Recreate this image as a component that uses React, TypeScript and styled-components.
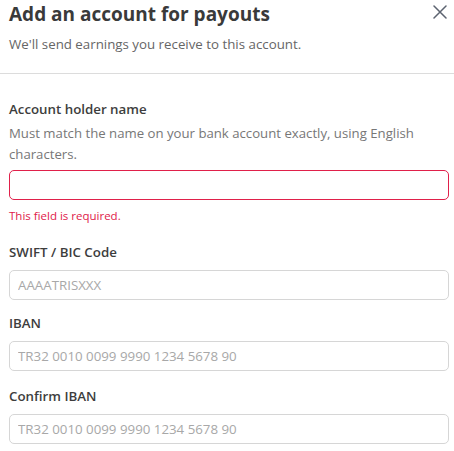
import React from "react";
import styled, { createGlobalStyle } from "styled-components";

const GlobalStyle = createGlobalStyle`
  html, body {
    margin: 0;
    padding: 0;
    background: #ffffff;
  }
  body {
    font-family: "Open Sans", "Noto Sans", sans-serif;
    color: #3d3d3d;
  }
  * {
    box-sizing: border-box;
  }
`;

const Panel = styled.div`
  width: 454px;
  height: 451px;
  overflow: hidden;
  background: #fff;
`;

const Header = styled.div`
  display: flex;
  align-items: flex-start;
  justify-content: space-between;
  padding: 1px 6px 0 9px;
  height: 74px;
  border-bottom: 1px solid #dcdcdc;
`;

const HeaderText = styled.div`
  display: flex;
  flex-direction: column;
`;

const Title = styled.h2`
  margin: 0;
  font-size: 19px;
  font-weight: 700;
  line-height: 26px;
  color: #3a3a3a;
`;

const Subtitle = styled.p`
  margin: 8px 0 0;
  font-size: 13.3px;
  line-height: 18px;
  color: #666;
`;

const CloseButton = styled.button`
  border: none;
  background: none;
  padding: 0;
  margin-top: 3px;
  width: 16px;
  height: 16px;
  cursor: pointer;
  display: flex;
  align-items: center;
  justify-content: center;
`;

const Form = styled.div`
  display: flex;
  flex-direction: column;
  padding: 25px 5px 0 9px;
`;

const Field = styled.div<{ $gap?: number }>`
  display: flex;
  flex-direction: column;
  margin-bottom: ${(p) => p.$gap ?? 15}px;
`;

const Label = styled.label`
  font-size: 13.3px;
  font-weight: 600;
  line-height: 20px;
  color: #3d3d3d;
  margin-bottom: 8px;
`;

const Help = styled.p`
  margin: -4px 0 5px;
  font-size: 13.2px;
  line-height: 21px;
  color: #777;
`;

const Input = styled.input<{ $invalid?: boolean }>`
  width: 100%;
  height: 30px;
  border: 1px solid ${(p) => (p.$invalid ? "#e0204a" : "#d6d6d6")};
  border-radius: 5px;
  padding: 0 8px;
  font-family: inherit;
  font-size: 13.3px;
  color: #333;
  outline: none;
  &::placeholder {
    color: #a8a8a8;
  }
`;

const ErrorText = styled.div`
  margin-top: 8px;
  font-size: 11.5px;
  line-height: 16px;
  color: #e0204a;
`;

export default function App() {
  return (
    <>
      <GlobalStyle />
      <Panel>
        <Header>
          <HeaderText>
            <Title>Add an account for payouts</Title>
            <Subtitle>We'll send earnings you receive to this account.</Subtitle>
          </HeaderText>
          <CloseButton aria-label="Close">
            <svg width="14" height="14" viewBox="0 0 14 14">
              <path d="M1 1L13 13M13 1L1 13" stroke="#5c6370" strokeWidth="1.5" strokeLinecap="round" />
            </svg>
          </CloseButton>
        </Header>
        <Form>
          <Field $gap={18}>
            <Label>Account holder name</Label>
            <Help>Must match the name on your bank account exactly, using English characters.</Help>
            <Input $invalid />
            <ErrorText>This field is required.</ErrorText>
          </Field>
          <Field $gap={13}>
            <Label>SWIFT / BIC Code</Label>
            <Input placeholder="AAAATRISXXX" />
          </Field>
          <Field $gap={15}>
            <Label>IBAN</Label>
            <Input placeholder="TR32 0010 0099 9990 1234 5678 90" />
          </Field>
          <Field>
            <Label>Confirm IBAN</Label>
            <Input placeholder="TR32 0010 0099 9990 1234 5678 90" />
          </Field>
        </Form>
      </Panel>
    </>
  );
}
